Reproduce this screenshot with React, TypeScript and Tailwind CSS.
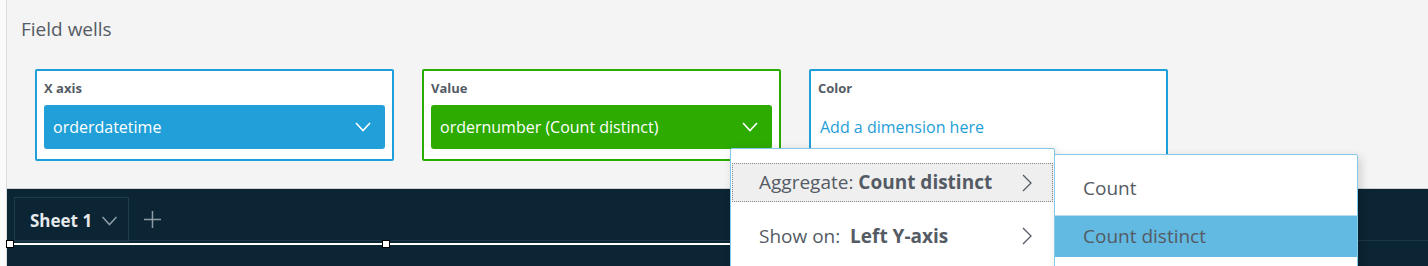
import React from "react";

const font = { fontFamily: '"Open Sans", "Noto Sans", Arial, sans-serif' };

function ChevronDown({ className }: { className?: string }) {
  return (
    <svg viewBox="0 0 16 10" className={className} fill="none">
      <polyline points="1,1 8,8.5 15,1" stroke="currentColor" strokeWidth="1.6" />
    </svg>
  );
}

function ChevronRight({ className }: { className?: string }) {
  return (
    <svg viewBox="0 0 10 18" className={className} fill="none">
      <polyline points="1,1 9,9 1,17" stroke="currentColor" strokeWidth="1.3" />
    </svg>
  );
}

function Well({
  label,
  border,
  children,
}: {
  label: string;
  border: string;
  children: React.ReactNode;
}) {
  return (
    <div className={`w-[359px] h-[92px] bg-white border-2 ${border} rounded-[2px] px-[7px] flex flex-col`}>
      <div className="h-[34px] flex items-center text-[13px] font-bold text-[#545b64] pt-[1px]">
        {label}
      </div>
      {children}
    </div>
  );
}

function Pill({ text, bg }: { text: string; bg: string }) {
  return (
    <div className={`h-[44px] ${bg} rounded-[3px] flex items-center justify-between pl-[9px] pr-[14px] text-white text-[16px]`}>
      <span>{text}</span>
      <ChevronDown className="w-[16px] h-[10px]" />
    </div>
  );
}

export default function App() {
  return (
    <div style={font} className="w-[1428px] h-[266px] flex overflow-hidden relative">
      <div className="w-[7px] bg-[#fafafa] border-r border-[#dcdcdc]" />
      <div className="flex-1 flex flex-col">
        <div className="h-[189px] bg-[#f4f4f4] border-b border-[#cfcfcf]">
          <div className="pl-[14px] pt-[16px] text-[19px] text-[#545b64] leading-[26px]">Field wells</div>
          <div className="flex gap-[28px] pl-[28px] pt-[27px]">
            <Well label="X axis" border="border-[#1f9fd9]">
              <Pill text="orderdatetime" bg="bg-[#219fd8]" />
            </Well>
            <Well label="Value" border="border-[#2aab00]">
              <Pill text="ordernumber (Count distinct)" bg="bg-[#2dab00]" />
            </Well>
            <Well label="Color" border="border-[#1f9fd9]">
              <div className="h-[44px] flex items-center pl-[2px] text-[16px] text-[#1f9ed8]">
                Add a dimension here
              </div>
            </Well>
          </div>
        </div>
        <div className="flex-1 bg-[#0b2534] flex flex-col">
          <div className="h-[52px] border-b border-[#1b3646] flex items-start pl-[7px] pt-[8px]">
            <div className="h-[45px] w-[115px] border border-[#1f3b4c] flex items-center pl-[15px] pt-[3px] gap-[9px]">
              <span className="text-[17px] font-bold text-[#e6e9ec]">Sheet 1</span>
              <ChevronDown className="w-[17px] h-[10px] text-[#8d9ba5]" />
            </div>
            <div className="h-[45px] flex items-center pl-[14px]">
              <svg viewBox="0 0 20 20" className="w-[19px] h-[19px] text-[#8d9ba5]">
                <path d="M10 1v18M1 10h18" stroke="currentColor" strokeWidth="1.6" />
              </svg>
            </div>
          </div>
          <div className="relative ml-[3px] w-[752px] mt-[2px] border-t-2 border-white">
            <span className="absolute left-[-4px] top-[-5px] w-[8px] h-[8px] bg-white border border-black" />
            <span className="absolute left-[372px] top-[-5px] w-[8px] h-[8px] bg-white border border-black" />
            <span className="absolute right-[-4px] top-[-5px] w-[8px] h-[8px] bg-white border border-black" />
          </div>
        </div>
      </div>

      <div className="absolute left-[730px] top-[148px] w-[325px] h-[140px] bg-white border border-[#86c8e8] rounded-[2px] shadow-[2px_2px_8px_rgba(0,0,0,0.15)] pt-[14px] px-[1px] text-[19px] text-[#545b64]">
        <div className="h-[39px] bg-[#efefef] border border-dotted border-[#888] flex items-center justify-between pl-[26px] pr-[20px]">
          <span>
            Aggregate: <span className="font-bold">Count distinct</span>
          </span>
          <ChevronRight className="w-[10px] h-[18px]" />
        </div>
        <div className="h-[68px] flex items-center justify-between pl-[27px] pr-[21px]">
          <span>
            Show on:&nbsp; <span className="font-bold">Left Y-axis</span>
          </span>
          <ChevronRight className="w-[10px] h-[18px]" />
        </div>
      </div>

      <div className="absolute left-[1054px] top-[154px] w-[304px] h-[130px] bg-white border border-[#86c8e8] rounded-[2px] shadow-[3px_3px_10px_rgba(0,0,0,0.15)] text-[19px] text-[#545b64]">
        <div className="h-[60px] flex items-center pl-[28px] pt-[7px]">Count</div>
        <div className="h-[42px] bg-[#62b9e1] border-t border-[#b5def1] flex items-center pl-[28px]">Count distinct</div>
      </div>
    </div>
  );
}
